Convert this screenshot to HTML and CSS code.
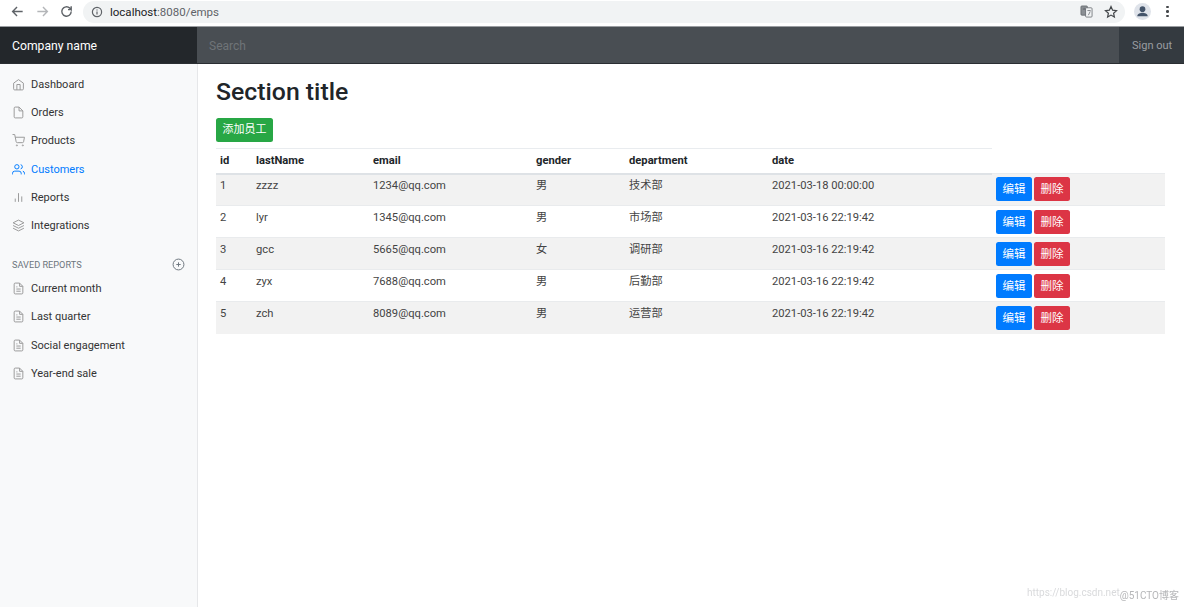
FILE: index.html
```html
<!DOCTYPE html>
<html lang="zh">
<head>
<meta charset="utf-8">
<title>emps</title>
<link rel="stylesheet" href="styles.css">
</head>
<body>
<div class="chrome">
  <svg class="ci back" viewBox="0 0 16 16"><path d="M13.5 8H3M7.5 3.2 2.8 8l4.7 4.8"/></svg>
  <svg class="ci fwd" viewBox="0 0 16 16"><path d="M2.5 8H13M8.5 3.2 13.2 8l-4.7 4.8"/></svg>
  <svg class="ci reload" viewBox="0 0 16 16"><path d="M13 8a5 5 0 1 1-1.5-3.6L13 6V2.5M13 6H9.6"/></svg>
  <div class="omnibox">
    <svg class="info" viewBox="0 0 12 12"><circle cx="6" cy="6" r="4.6"/><path d="M6 5.4v3M6 3.4v1"/></svg>
    <span class="url">localhost<span class="url-rest">:8080/emps</span></span>
    <span class="omni-right">
      <svg class="translate" viewBox="0 0 14 14"><rect x="1" y="1" width="7" height="10" rx="1" class="tr-a"/><rect x="6" y="3" width="7" height="10" rx="1" class="tr-b"/><path d="M3 4.5h3M4.5 3v1.5M8 6h3.5M9 11l2-4"/></svg>
      <svg class="star" viewBox="0 0 14 14"><path d="M7 1.6 8.6 5.2l3.9.4-2.9 2.6.8 3.9L7 10.100l-3.400 2 .8-3.900L1.500 5.600l3.900-.4z"/></svg>
    </span>
  </div>
  <span class="avatar"><svg viewBox="0 0 18 18"><circle cx="9" cy="6.500" r="3"/><path d="M3.500 14c0-2.600 3.500-3.600 5.500-3.600s5.500 1 5.500 3.600z"/></svg></span>
  <span class="menu-dots"><i></i><i></i><i></i></span>
</div>

<nav class="navbar">
  <a class="brand">Company name</a>
  <div class="search">Search</div>
  <a class="signout">Sign out</a>
</nav>

<div class="layout">
  <aside class="sidebar">
    <ul class="nav">
      <li><svg class="ic" viewBox="0 0 24 24"><path d="M3 9.500 12 3l9 6.500V20a2 2 0 0 1-2 2H5a2 2 0 0 1-2-2z"/><path d="M9 22V12h6v10"/></svg>Dashboard</li>
      <li><svg class="ic" viewBox="0 0 24 24"><path d="M13 2H6a2 2 0 0 0-2 2v16a2 2 0 0 0 2 2h12a2 2 0 0 0 2-2V9z"/><path d="M13 2v7h7"/></svg>Orders</li>
      <li><svg class="ic" viewBox="0 0 24 24"><circle cx="9" cy="21" r="1"/><circle cx="20" cy="21" r="1"/><path d="M1 1h4l2.700 13.400a2 2 0 0 0 2 1.600h9.700a2 2 0 0 0 2-1.600L23 6H6"/></svg>Products</li>
      <li class="active"><svg class="ic" viewBox="0 0 24 24"><path d="M17 21v-2a4 4 0 0 0-4-4H5a4 4 0 0 0-4 4v2"/><circle cx="9" cy="7" r="4"/><path d="M23 21v-2a4 4 0 0 0-3-3.900M16 3.100a4 4 0 0 1 0 7.800"/></svg>Customers</li>
      <li><svg class="ic" viewBox="0 0 24 24"><path d="M18 20V10M12 20V4M6 20v-6"/></svg>Reports</li>
      <li><svg class="ic" viewBox="0 0 24 24"><path d="M12 2 2 7l10 5 10-5z"/><path d="m2 17 10 5 10-5M2 12l10 5 10-5"/></svg>Integrations</li>
    </ul>
    <h6 class="side-heading">SAVED REPORTS<svg class="plus" viewBox="0 0 24 24"><circle cx="12" cy="12" r="10"/><path d="M12 8v8M8 12h8"/></svg></h6>
    <ul class="nav">
      <li><svg class="ic" viewBox="0 0 24 24"><path d="M14 2H6a2 2 0 0 0-2 2v16a2 2 0 0 0 2 2h12a2 2 0 0 0 2-2V8z"/><path d="M14 2v6h6M16 13H8M16 17H8M10 9H8"/></svg>Current month</li>
      <li><svg class="ic" viewBox="0 0 24 24"><path d="M14 2H6a2 2 0 0 0-2 2v16a2 2 0 0 0 2 2h12a2 2 0 0 0 2-2V8z"/><path d="M14 2v6h6M16 13H8M16 17H8M10 9H8"/></svg>Last quarter</li>
      <li><svg class="ic" viewBox="0 0 24 24"><path d="M14 2H6a2 2 0 0 0-2 2v16a2 2 0 0 0 2 2h12a2 2 0 0 0 2-2V8z"/><path d="M14 2v6h6M16 13H8M16 17H8M10 9H8"/></svg>Social engagement</li>
      <li><svg class="ic" viewBox="0 0 24 24"><path d="M14 2H6a2 2 0 0 0-2 2v16a2 2 0 0 0 2 2h12a2 2 0 0 0 2-2V8z"/><path d="M14 2v6h6M16 13H8M16 17H8M10 9H8"/></svg>Year-end sale</li>
    </ul>
  </aside>

  <main class="main">
    <h2 class="title">Section title</h2>
    <a class="btn btn-green add">添加员工</a>
    <table class="emps">
      <colgroup>
        <col class="c-id"><col class="c-name"><col class="c-email"><col class="c-gender"><col class="c-dept"><col class="c-date"><col>
      </colgroup>
      <thead>
        <tr><th>id</th><th>lastName</th><th>email</th><th>gender</th><th>department</th><th>date</th></tr>
      </thead>
      <tbody>
        <tr><td>1</td><td>zzzz</td><td>1234@qq.com</td><td>男</td><td>技术部</td><td>2021-03-18 00:00:00</td><td class="acts"><a class="btn btn-blue">编辑</a><a class="btn btn-red">删除</a></td></tr>
        <tr><td>2</td><td>lyr</td><td>1345@qq.com</td><td>男</td><td>市场部</td><td>2021-03-16 22:19:42</td><td class="acts"><a class="btn btn-blue">编辑</a><a class="btn btn-red">删除</a></td></tr>
        <tr><td>3</td><td>gcc</td><td>5665@qq.com</td><td>女</td><td>调研部</td><td>2021-03-16 22:19:42</td><td class="acts"><a class="btn btn-blue">编辑</a><a class="btn btn-red">删除</a></td></tr>
        <tr><td>4</td><td>zyx</td><td>7688@qq.com</td><td>男</td><td>后勤部</td><td>2021-03-16 22:19:42</td><td class="acts"><a class="btn btn-blue">编辑</a><a class="btn btn-red">删除</a></td></tr>
        <tr><td>5</td><td>zch</td><td>8089@qq.com</td><td>男</td><td>运营部</td><td>2021-03-16 22:19:42</td><td class="acts"><a class="btn btn-blue">编辑</a><a class="btn btn-red">删除</a></td></tr>
      </tbody>
    </table>
  </main>
</div>
<div class="watermark"><span class="wm-a">https://blog.csdn.net</span><span class="wm-b">@51CTO博客</span></div>
</body>
</html>
```
FILE: styles.css
```css
* { box-sizing: border-box; }
html, body { margin: 0; height: 100%; overflow: hidden; }
body {
  font-family: Roboto, "Noto Sans CJK SC", sans-serif;
  font-size: 11.2px;
  color: #212529;
  background: #fff;
  position: relative;
}
.chrome {
  height: 27px;
  display: flex;
  align-items: center;
  background: #fff;
  border-bottom: 1px solid #9a9da1;
  padding: 0 0 3px 10px;
}
.ci { width: 15px; height: 15px; fill: none; stroke: #5f6368; stroke-width: 1.5; flex: none; }
.fwd { margin-left: 10px; stroke: #b4b6b9; }
.reload { margin-left: 9px; }
.omnibox {
  margin-left: 9px;
  width: 1042px;
  height: 22px;
  border-radius: 11px;
  background: #f1f3f4;
  display: flex;
  align-items: center;
  padding-left: 8px;
}
.info { width: 12px; height: 12px; fill: none; stroke: #5f6368; stroke-width: 1.2; }
.url { margin-left: 7px; font-size: 11.500px; color: #202124; }
.url-rest { color: #5f6368; }
.omni-right { margin-left: auto; display: flex; align-items: center; gap: 11px; padding-right: 7px; }
.translate { width: 13px; height: 13px; fill: none; stroke: #5f6368; stroke-width: .8; }
.tr-a { fill: #8b8f94; }
.tr-b { fill: #f1f3f4; }
.star { width: 14px; height: 14px; fill: none; stroke: #44474a; stroke-width: 1.2; }
.avatar {
  margin-left: 9px;
  width: 17px; height: 17px;
  border-radius: 50%;
  background: #dfe3ea;
  display: flex; align-items: center; justify-content: center;
}
.avatar svg { width: 17px; height: 17px; fill: #44546a; }
.menu-dots { margin-left: 15px; display: flex; flex-direction: column; gap: 2px; }
.menu-dots i { width: 2.500px; height: 2.500px; border-radius: 50%; background: #44474a; display: block; }

.navbar {
  height: 37px;
  display: flex;
  align-items: stretch;
  background: #343a40;
  border-bottom: 1px solid #2a2e32;
}
.brand {
  width: 197px;
  background: #23272b;
  color: #fff;
  font-size: 12.200px;
  line-height: 36px;
  padding: 1px 0 0 12px;
}
.search {
  flex: 1;
  background: #494e53;
  color: #6f7478;
  font-size: 12px;
  line-height: 36px;
  padding: 1px 0 0 12px;
}
.signout {
  width: 65px;
  color: #9a9da0;
  font-size: 11px;
  line-height: 36px;
  padding: 1px 0 0 13px;
}

.layout { display: flex; height: 543px; }
.sidebar {
  width: 198px;
  flex: none;
  background: #f8f9fa;
  border-right: 1px solid #e6e7e9;
  padding-top: 6px;
}
.nav { list-style: none; margin: 0; padding: 0; }
.nav li {
  height: 28.300px;
  display: flex;
  align-items: center;
  padding-left: 12px;
  color: #333;
  font-size: 11px;
  font-weight: 400;
}
.nav li.active { color: #007bff; }
.ic { width: 13px; height: 13px; margin-right: 6px; fill: none; stroke: #999; stroke-width: 1.800; flex: none; }
.active .ic { stroke: #007bff; }
.side-heading {
  margin: 15.500px 0 0;
  height: 19px;
  padding: 0 12px;
  display: flex;
  align-items: center;
  justify-content: space-between;
  font-size: 9.200px;
  font-weight: 400;
  color: #6c757d;
}
.plus { width: 13px; height: 13px; fill: none; stroke: #6c757d; stroke-width: 1.800; }

.main { flex: 1; padding: 0 19px 0 18px; }
.title { margin: 12px 0 10px; font-size: 24.800px; font-weight: 500; line-height: 32px; color: #212529; }
.btn {
  display: inline-block;
  color: #fff;
  border-radius: 2.500px;
  font-size: 11.500px;
  line-height: 24px;
  height: 24px;
  text-align: center;
}
.btn-green { background: #28a745; }
.add { width: 57px; display: block; font-size: 11px; }
.btn-blue { background: #007bff; width: 36px; }
.btn-red { background: #dc3545; width: 36px; margin-left: 2px; }

.emps {
  margin-top: 6px;
  width: 949px;
  table-layout: fixed;
  border-collapse: collapse;
}
.c-id { width: 36px; }
.c-name { width: 117px; }
.c-email { width: 163px; }
.c-gender { width: 93px; }
.c-dept { width: 143px; }
.c-date { width: 224px; }
.emps th {
  height: 25px;
  text-align: left;
  padding: 0 4px 1px;
  font-size: 11.200px;
  font-weight: 700;
  color: #212529;
  border-top: 1px solid #e9ecef;
  border-bottom: 2px solid #dee2e6;
}
.emps td {
  height: 32px;
  padding: 4px;
  vertical-align: top;
  color: #444;
  font-size: 11.200px;
  line-height: 16px;
  border-top: 1px solid #e9ebed;
}
.emps tbody tr:first-child td { padding-top: 3px; }
.emps tbody tr:nth-child(odd) { background: #f2f2f2; }
.emps tbody td.acts { padding: 3.500px 4px 0; line-height: 0; white-space: nowrap; }
.acts .btn { line-height: 24px; vertical-align: top; }

.watermark {
  position: absolute;
  right: 5px;
  bottom: 5px;
  font-size: 10px;
  display: flex;
  filter: blur(.4px);
}
.wm-a { color: #d9dadc; }
.wm-b { color: #b5b6b8; margin-left: 0; }
```
